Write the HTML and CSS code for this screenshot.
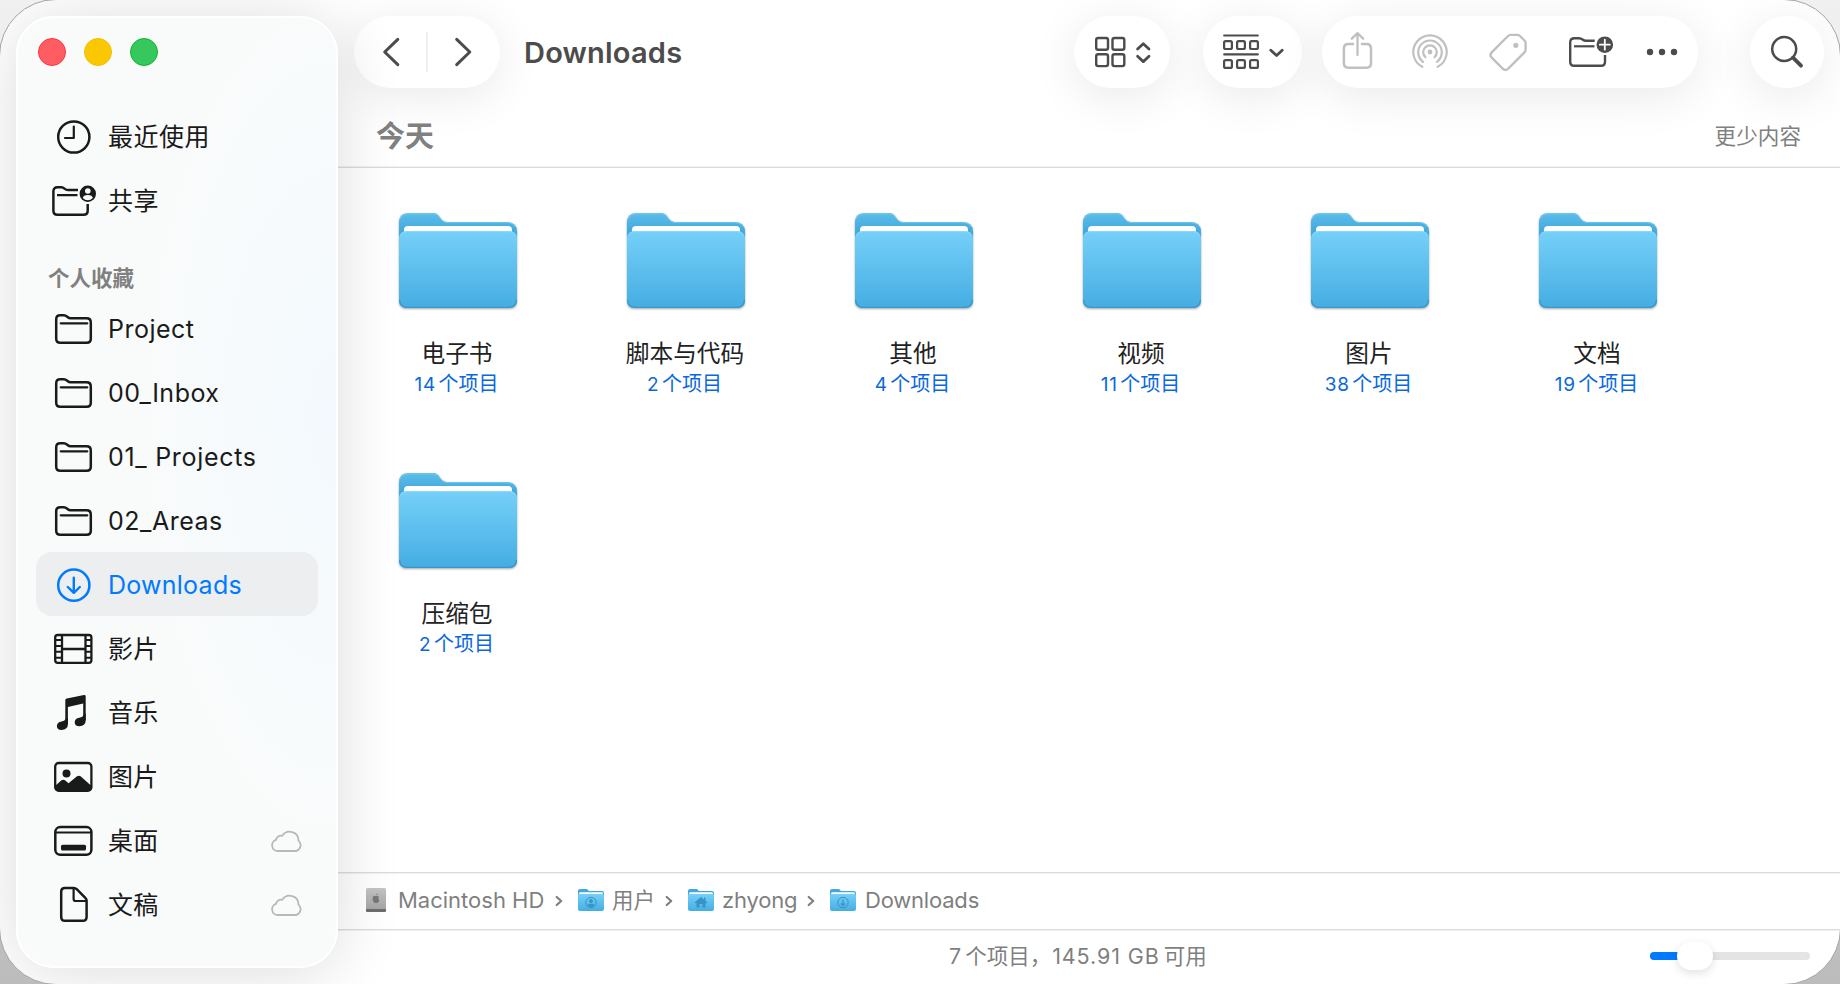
FILE: index.html
```html
<!DOCTYPE html>
<html lang="zh-CN">
<head>
<meta charset="utf-8">
<title>Downloads</title>
<link rel="stylesheet" href="styles.css">
</head>
<body>
<svg class="defs" width="0" height="0" aria-hidden="true">
  <defs>
    <linearGradient id="front" x1="0" y1="0" x2="0" y2="1"><stop offset="0" stop-color="#75d0f9"/><stop offset="1" stop-color="#45ade2"/></linearGradient>
    <linearGradient id="back" x1="0" y1="0" x2="0" y2="1"><stop offset="0" stop-color="#5bbdea"/><stop offset="0.25" stop-color="#41a8dc"/><stop offset="1" stop-color="#3fa4d8"/></linearGradient>
    <linearGradient id="disk" x1="0" y1="0" x2="0" y2="1"><stop offset="0" stop-color="#c4c4c4"/><stop offset="1" stop-color="#a2a2a2"/></linearGradient>
    <symbol id="big-folder" viewBox="0 0 118 96">
      <path d="M0 10Q0 0 9 0H34C42 0 40 9 49 9H108Q118 9 118 19V80H0Z" fill="url(#back)"/>
      <path d="M1 6Q4 .8 9 .8H34C42 .8 40 9.7 49 9.7H108Q114 9.7 116.5 14" fill="none" stroke="#7ccdf2" stroke-width="1" opacity=".7"/>
      <path d="M5 30V17Q5 13 9 13H109Q113 13 113 17V30Z" fill="#fff"/>
      <path d="M0 26Q0 18 8 18H110Q118 18 118 26V87Q118 95 110 95H8Q0 95 0 87Z" fill="url(#front)"/>
      <path d="M.6 87Q1 94.3 8 94.3H110Q117 94.3 117.4 87" fill="none" stroke="#3997cb" stroke-width="1.3"/>
      <path d="M1.5 22.500Q3 18.600 8 18.600H110Q115 18.600 116.500 22.500" fill="none" stroke="#8bdafc" stroke-width="1"/>
    </symbol>
    <symbol id="small-folder" viewBox="0 0 26 22">
      <path d="M0 2Q0 0 2 0H8.500C10 0 10 2 11.500 2H24Q26 2 26 4V18H0Z" fill="#41a8dc"/>
      <path d="M1.200 8V4.200Q1.200 3.300 2.200 3.300H23.800Q24.800 3.300 24.800 4.200V8Z" fill="#fff"/>
      <path d="M0 6.500Q0 5 1.500 5H24.500Q26 5 26 6.500V20Q26 22 24 22H2Q0 22 0 20Z" fill="url(#front)"/>
    </symbol>
    <symbol id="folder" viewBox="0 0 52 40">
      <g fill="none" stroke="currentColor" stroke-width="2.500" stroke-linecap="round" stroke-linejoin="round">
        <path d="M8.200 10.200Q8.200 6.200 12.200 6.200H15.800C19.200 6.200 19.200 9.300 22.800 9.300H38.600Q42.800 9.300 42.800 13.500V29.800Q42.800 33.800 38.800 33.800H12.200Q8.200 33.800 8.200 29.800Z"/>
        <path d="M12.700 14.300H39.300" stroke-width="2.200"/>
      </g>
    </symbol>
    <symbol id="cloud" viewBox="0 0 32 22">
      <path d="M7 21H25A6 6 0 0 0 27.500 10.600A8.800 8.800 0 0 0 11.300 5.800A5 5 0 0 0 5 9.900A5.700 5.700 0 0 0 7 21Z" fill="none" stroke="currentColor" stroke-width="1.800" stroke-linejoin="round"/>
    </symbol>
    <symbol id="sep" viewBox="0 0 8 12"><path d="M1.700 2L6.200 6L1.700 10" fill="none" stroke="currentColor" stroke-width="2.200" stroke-linecap="round" stroke-linejoin="round"/></symbol>
  </defs>
</svg>

<div class="window">
  <aside class="sidebar">
    <div class="lights"><i class="light red"></i><i class="light yellow"></i><i class="light green"></i></div>
    <nav class="nav nav-top">
      <a class="row"><svg class="icon" viewBox="0 0 52 40"><g fill="none" stroke="currentColor" stroke-width="2.500" stroke-linecap="round" stroke-linejoin="round"><circle cx="25.800" cy="20" r="15.600"/><path d="M25.800 9.500V21H17" stroke-width="2.200"/></g></svg><span class="name">最近使用</span></a>
      <a class="row"><svg class="icon" viewBox="0 0 52 40"><g fill="none" stroke="currentColor" stroke-width="2.500"><path d="M30 9.100H20C16.500 9.100 16.500 6.300 13.500 6.300H9.500Q5.400 6.300 5.400 10.300V29.800Q5.400 33.800 9.400 33.800H35.700Q39.700 33.800 39.700 29.800V23"/><path d="M9 14.200H29.500" stroke-width="2.200"/></g><circle cx="39.800" cy="12.700" r="8.200" fill="currentColor"/><circle cx="39.800" cy="10" r="2.800" fill="#f9fafa"/><path d="M34.800 17Q35.200 13.900 39.800 13.900T44.800 17Q42.700 19.200 39.800 19.200T34.800 17Z" fill="#f9fafa"/></svg><span class="name">共享</span></a>
    </nav>
    <h2 class="section">个人收藏</h2>
    <nav class="nav">
      <a class="row"><svg class="icon"><use href="#folder"/></svg><span class="name wide">Project</span></a>
      <a class="row"><svg class="icon"><use href="#folder"/></svg><span class="name wide">00_Inbox</span></a>
      <a class="row"><svg class="icon"><use href="#folder"/></svg><span class="name wider">01_ Projects</span></a>
      <a class="row"><svg class="icon"><use href="#folder"/></svg><span class="name wide">02_Areas</span></a>
      <a class="row selected"><svg class="icon" viewBox="0 0 52 40"><g fill="none" stroke="currentColor" stroke-width="2.500" stroke-linecap="round" stroke-linejoin="round"><circle cx="25.800" cy="20.200" r="15.600"/><path d="M25.800 12.800V27.300M19.800 22L25.800 27.800L31.800 22" stroke-width="2.400"/></g></svg><span class="name">Downloads</span></a>
      <a class="row"><svg class="icon" viewBox="0 0 52 40"><g fill="none" stroke="currentColor" stroke-width="2.300"><rect x="7.200" y="6" width="36.200" height="27.800" rx="2.500"/><path d="M14 6V34M37.500 6V34M14 20H37.500"/><path d="M7 11H14M7 17H14M7 22.700H14M7 28.700H14M37.500 11H43M37.500 17H43M37.500 22.700H43M37.500 28.700H43" stroke-width="2.100"/></g></svg><span class="name">影片</span></a>
      <a class="row"><svg class="icon" viewBox="0 0 52 40"><g fill="currentColor"><path d="M17.300 7.300Q17.300 5.800 18.800 5.500L36 2Q37.700 1.800 37.700 3.200V27.500H35.200V10.600L19.900 13.900V31.500H17.300Z"/><path d="M19.900 24.500V31Q19.900 36.700 13.500 36.900Q8.900 36.700 8.900 32.900Q9 29.300 13.500 28.400Q17.300 27.800 17.300 26Z"/><path d="M37.700 20.500V27Q37.700 33 31.300 33.200Q26.700 33 26.700 29.200Q26.800 25.600 31.300 24.700Q35.200 24 35.200 22Z"/></g></svg><span class="name">音乐</span></a>
      <a class="row"><svg class="icon" viewBox="0 0 52 40"><rect x="7.200" y="6" width="36.200" height="27.800" rx="3.500" fill="none" stroke="currentColor" stroke-width="2.300"/><g fill="currentColor"><circle cx="18.500" cy="16.400" r="4"/><path d="M7 29L13.500 23.300Q15.300 22 17 23.300L20.500 26.300L29 19.300Q30.800 18.100 32.600 19.300L43.500 29V32Q42.500 34 40 34H10Q8 34 7 32Z"/></g></svg><span class="name">图片</span></a>
      <a class="row"><svg class="icon" viewBox="0 0 52 40"><rect x="7.300" y="6.100" width="36.100" height="27.700" rx="5" fill="none" stroke="currentColor" stroke-width="2.500"/><path d="M8 11.500H43" stroke="currentColor" stroke-width="2"/><rect x="13" y="23.700" width="25" height="5.700" rx="1.500" fill="currentColor"/></svg><span class="name">桌面</span><svg class="cloud"><use href="#cloud"/></svg></a>
      <a class="row"><svg class="icon" viewBox="0 0 52 40"><g fill="none" stroke="currentColor" stroke-width="2.500" stroke-linejoin="round"><path d="M17 3H25.800Q27.500 3 28.700 4.200L37.300 12.800Q38.600 14 38.600 15.600V32Q38.600 35.800 34.800 35.800H17Q13.200 35.800 13.200 32V6.800Q13.200 3 17 3Z"/><path d="M25.600 3V14Q25.600 16 27.600 16H38.500" stroke-width="2.200"/></g></svg><span class="name">文稿</span><svg class="cloud"><use href="#cloud"/></svg></a>
    </nav>
  </aside>

  <main class="main">
    <header class="toolbar">
      <div class="pill history">
        <svg width="72" height="40" viewBox="0 0 72 40"><path d="M43.800 7.300L30.700 20L43.800 32.700" fill="none" stroke="currentColor" stroke-width="3" stroke-linecap="round" stroke-linejoin="round"/></svg>
        <i class="divider"></i>
        <svg width="72" height="40" viewBox="0 0 72 40"><path d="M28.700 7.300L41.800 20L28.700 32.700" fill="none" stroke="currentColor" stroke-width="3" stroke-linecap="round" stroke-linejoin="round"/></svg>
      </div>
      <h1 class="title">Downloads</h1>
      <div class="pill view">
        <svg width="96" height="40" viewBox="0 0 96 40"><g fill="none" stroke="currentColor" stroke-width="2.400" stroke-linecap="round" stroke-linejoin="round"><rect x="22.200" y="6" width="11.800" height="11.800" rx="2"/><rect x="38.500" y="6" width="11.800" height="11.800" rx="2"/><rect x="22.200" y="22.300" width="11.800" height="11.800" rx="2"/><rect x="38.500" y="22.300" width="11.800" height="11.800" rx="2"/><path d="M63.600 17L69.300 11.700L75 17M63.600 24.300L69.300 29.600L75 24.300" stroke-width="2.800"/></g></svg>
      </div>
      <div class="pill group">
        <svg width="99" height="40" viewBox="0 0 99 40"><g fill="none" stroke="currentColor" stroke-width="2.200" stroke-linecap="round" stroke-linejoin="round"><path d="M21.200 3.500H54.800M21.200 22.400H54.800"/><rect x="21.100" y="9.200" width="7.800" height="7.800" rx="1.500"/><rect x="34.100" y="9.200" width="7.800" height="7.800" rx="1.500"/><rect x="47.100" y="9.200" width="7.800" height="7.800" rx="1.500"/><rect x="21.100" y="28.100" width="7.800" height="7.800" rx="1.500"/><rect x="34.100" y="28.100" width="7.800" height="7.800" rx="1.500"/><rect x="47.100" y="28.100" width="7.800" height="7.800" rx="1.500"/><path d="M67.800 18.300L73.600 23.500L79.200 18.300" stroke-width="2.800"/></g></svg>
      </div>
      <div class="pill actions">
        <svg class="dim" width="44" height="44" viewBox="0 0 44 44"><g fill="none" stroke="currentColor" stroke-width="2.500" stroke-linecap="round" stroke-linejoin="round"><path d="M17 14H12.500Q7.900 14 7.900 18.700V33.300Q7.900 37.700 12.500 37.700H30.500Q35 37.700 35 33.300V18.700Q35 14 30.500 14H26"/><path d="M21.500 25V3.500M15.800 8.700L21.500 3.200L27.200 8.700" stroke-width="2.300"/></g></svg>
        <svg class="dim" width="44" height="44" viewBox="0 0 44 44"><g fill="none" stroke="currentColor" stroke-width="2.200" stroke-linecap="round"><path d="M14.300 36.800A16.700 16.700 0 1 1 29.700 36.800"/><path d="M15 31.800A11.800 11.800 0 1 1 29 31.800"/><path d="M17.500 27.200A6.800 6.800 0 1 1 26.500 27.200"/></g><circle cx="22" cy="22" r="2.400" fill="currentColor"/></svg>
        <svg class="dim" width="44" height="44" viewBox="0 0 44 44"><path d="M21.500 6.500Q23 4.900 25 4.900H31.300Q32.900 4.900 34 6L38.500 10.500Q39.600 11.600 39.600 13.200V19.200Q39.600 21.300 38.200 22.700L22.200 38.700Q19.400 41.200 16.700 38.600L5.700 27.700Q3.200 25 5.700 22.400Z" fill="none" stroke="currentColor" stroke-width="2.400" stroke-linejoin="round"/><circle cx="29.800" cy="15.300" r="2.600" fill="currentColor"/></svg>
        <svg width="52" height="44" viewBox="0 0 52 44"><g fill="none" stroke="currentColor" stroke-width="2.400"><path d="M31.700 10.800H23C19.500 10.800 19.500 8.200 16 8.200H11.500Q7.200 8.200 7.200 12.200V31.800Q7.200 35.800 11.200 35.800H38Q42 35.800 42 31.800V25"/><path d="M11 16.300H31.500" stroke-width="2.200"/></g><circle cx="41.800" cy="14.700" r="8.300" fill="currentColor"/><path d="M36.800 14.700H46.800M41.800 9.700V19.700" stroke="#fff" stroke-width="1.800" stroke-linecap="round"/></svg>
        <svg width="44" height="44" viewBox="0 0 44 44"><g fill="currentColor"><circle cx="10" cy="22" r="3.200"/><circle cx="22" cy="22" r="3.200"/><circle cx="34" cy="22" r="3.200"/></g></svg>
      </div>
      <div class="pill search">
        <svg width="74" height="40" viewBox="0 0 74 40"><circle cx="34.200" cy="17" r="12" fill="none" stroke="currentColor" stroke-width="2.500"/><path d="M43 25.700L51 33.700" stroke="currentColor" stroke-width="3.800" stroke-linecap="round"/></svg>
      </div>
    </header>

    <div class="group-head"><h2 class="today">今天</h2><span class="less">更少内容</span></div>

    <section class="grid">
      <div class="item"><svg class="folder-art"><use href="#big-folder"/></svg><span class="label">电子书</span><span class="count"><b>14</b>个项目</span></div>
      <div class="item"><svg class="folder-art"><use href="#big-folder"/></svg><span class="label">脚本与代码</span><span class="count"><b>2</b>个项目</span></div>
      <div class="item"><svg class="folder-art"><use href="#big-folder"/></svg><span class="label">其他</span><span class="count"><b>4</b>个项目</span></div>
      <div class="item"><svg class="folder-art"><use href="#big-folder"/></svg><span class="label">视频</span><span class="count"><b>11</b>个项目</span></div>
      <div class="item"><svg class="folder-art"><use href="#big-folder"/></svg><span class="label">图片</span><span class="count"><b>38</b>个项目</span></div>
      <div class="item"><svg class="folder-art"><use href="#big-folder"/></svg><span class="label">文档</span><span class="count"><b>19</b>个项目</span></div>
      <div class="item"><svg class="folder-art"><use href="#big-folder"/></svg><span class="label">压缩包</span><span class="count"><b>2</b>个项目</span></div>
    </section>

    <footer class="pathbar">
      <svg class="disk" viewBox="0 0 20 24"><rect width="20" height="24" rx="1.500" fill="url(#disk)"/><path d="M0 21H20V22.500Q20 24 18.500 24H1.500Q0 24 0 22.500Z" fill="#6d6d6d"/><path d="M10 8.200Q8 7.200 6.900 9Q6 11.500 7.600 14Q8.700 15.500 10 14.800Q11.500 15.500 12.500 14Q13.200 13 13.400 12.200Q11.500 11 13 8.800Q11.700 7.400 10 8.200ZM10 7.500Q9.900 6 11.500 5.300Q11.600 7 10 7.500Z" fill="#777"/></svg>
      <span class="crumb c-disk">Macintosh HD</span>
      <svg class="sep"><use href="#sep"/></svg>
      <svg class="mini" viewBox="0 0 26 22"><use href="#small-folder"/><g fill="none" stroke="#3793c4" stroke-width="1"><circle cx="13" cy="13.500" r="5.200"/></g><circle cx="13" cy="12" r="1.900" fill="#3793c4"/><path d="M9.300 16Q13 13.500 16.700 16Q13 20 9.300 16Z" fill="#3793c4"/></svg>
      <span class="crumb c-users">用户</span>
      <svg class="sep"><use href="#sep"/></svg>
      <svg class="mini" viewBox="0 0 26 22"><use href="#small-folder"/><path d="M6.500 13.500L13 8L19.500 13.500L18.500 14.200L17.500 13.500V18.500H14.500V15H11.500V18.500H8.500V13.500L7.500 14.200Z" fill="#3793c4"/><path d="M16 8.500H17.500V11.500H16Z" fill="#3793c4"/></svg>
      <span class="crumb c-home">zhyong</span>
      <svg class="sep"><use href="#sep"/></svg>
      <svg class="mini" viewBox="0 0 26 22"><use href="#small-folder"/><g fill="none" stroke="#3793c4" stroke-width="1"><circle cx="13" cy="13.500" r="5.200"/><path d="M13 10.500V16.200M11 14.500L13 16.500L15 14.500" stroke-width="1.200"/></g></svg>
      <span class="crumb c-down">Downloads</span>
    </footer>
    <footer class="status">
      <span class="summary">7<i class="thin"></i>个项目，<span class="size">145.91 GB</span><i class="thin"></i>可用</span>
      <div class="slider"><i class="fill"></i><i class="knob"></i></div>
    </footer>
  </main>
</div>
</body>
</html>
```
FILE: styles.css
```css
* { box-sizing: border-box; }

body {
  display: flex;
  margin: 0;
  width: 1840px;
  height: 984px;
  overflow: hidden;
  background: linear-gradient(180deg, #f0f0f0 0%, #dcdcdc 50%, #bcbcbc 100%);
  font-family: Inter, "Noto Sans CJK SC", sans-serif;
  color: #1a1a1a;
}

svg { display: block; flex: none; }
h1, h2 { margin: 0; }
.defs { position: absolute; }

/* The frame sits one pixel past the viewport, so its outline shows on the corners only */
.window {
  display: flex;
  flex: none;
  width: 1842px;
  height: 986px;
  margin: -1px;
  padding: 16px 0 0 16px;
  border: 1px solid #a4a4a4;
  border-radius: 57px;
  background: #fff;
  overflow: hidden;
}

/* Sidebar */
.sidebar {
  position: relative;
  z-index: 1;
  flex: none;
  width: 322px;
  height: 952px;
  padding: 20px 18px 0;
  border-radius: 38px;
  border: 2px solid #fff;
  background: radial-gradient(ellipse 190px 420px at 100% 42%, #f3f9fe 0%, #f9fbfb 100%);
  box-shadow: 0 4px 64px rgba(0, 0, 0, 0.14);
}

.lights { display: flex; gap: 18px; padding-left: 2px; }
.light { width: 28px; height: 28px; border-radius: 50%; }
.red { background: #ff5d61; border: 1px solid #fb3440; }
.yellow { background: #f9c800; border: 1px solid #f4bd00; }
.green { background: #36c85c; border: 1px solid #10b62e; }

.nav-top { margin-top: 38px; }

.row {
  display: flex;
  align-items: center;
  height: 64px;
  padding: 2px 15px 0 12px;
  border-radius: 16px;
  font-size: 25px;
  line-height: 36px;
}

.row .icon { width: 52px; height: 40px; margin-right: 8px; }
.name { white-space: pre; letter-spacing: 0.250px; }
.nav-top .name { letter-spacing: 0.500px; }
.name.wide { letter-spacing: 0.500px; }
.name.wider { letter-spacing: 0.700px; }
.selected { background: #eceeef; color: #007aff; }
.cloud { width: 32px; height: 22px; margin-left: auto; color: #b8b8b8; }

.section {
  height: 64px;
  padding: 32px 0 0 12px;
  font-size: 21.500px;
  line-height: 28px;
  font-weight: 600;
  color: #808080;
}

/* Main column */
.main { flex: 1; min-width: 0; display: flex; flex-direction: column; }

.toolbar {
  display: flex;
  align-items: center;
  flex: none;
  height: 72px;
  padding: 0 16px;
  color: #4c4c4c;
}

.pill {
  display: flex;
  align-items: center;
  height: 72px;
  border-radius: 36px;
  background: #fff;
  box-shadow: 0 8px 48px rgba(0, 0, 0, 0.09);
}

.history { width: 146px; }
.divider { width: 2px; height: 40px; background: #f0f0f0; }
.title { margin-left: 24px; padding-top: 1px; font-size: 29px; line-height: 40px; font-weight: 600; letter-spacing: 0.200px; }
.view { margin-left: auto; }
.group { margin-left: 33px; }
.actions { width: 376px; margin-left: 20px; padding-left: 13.500px; }
.actions svg:nth-child(2) { margin-left: 28.500px; }
.actions svg:nth-child(3) { margin-left: 34px; }
.actions svg:nth-child(4) { margin-left: 32.500px; }
.actions svg:nth-child(5) { margin-left: 25.500px; }
.search { margin-left: 52px; }
.dim { color: #c0c0c0; }

.group-head {
  display: flex;
  justify-content: space-between;
  align-items: center;
  flex: none;
  height: 80px;
  padding: 17px 39px 0 38px;
  border-bottom: 1px solid #dcdcdc;
  box-shadow: inset 0 -1px #f0f0f0;
  color: #808080;
}

.today { padding-top: 2px; font-size: 29px; line-height: 40px; font-weight: 700; }
.less { font-size: 21.600px; line-height: 30px; }

.grid {
  flex: 1;
  display: grid;
  grid-template-columns: repeat(6, 228px);
  grid-auto-rows: 260px;
  align-content: start;
  padding: 45px 0 0 5px;
}

.item { display: flex; flex-direction: column; align-items: center; }

.folder-art {
  width: 118px;
  height: 96px;
  margin-left: 2px;
  filter: drop-shadow(0 1px 1px rgba(0, 0, 0, 0.35));
}

.label { margin-top: 28px; font-size: 23.700px; line-height: 34px; color: #222; }
.count { margin-left: -1px; font-size: 20px; line-height: 26px; color: #0a68de; }
.count b { margin-right: 2.500px; font-size: 19px; font-weight: 400; letter-spacing: 0.800px; }

/* Bottom bars */
.pathbar {
  display: flex;
  align-items: center;
  flex: none;
  height: 57px;
  padding: 0 0 2px 28px;
  border-top: 1px solid #dcdcdc;
  box-shadow: inset 0 1px #f0f0f0;
  font-size: 22px;
  line-height: 30px;
  color: #7f7f7f;
}

.disk { width: 20px; height: 24px; }
.crumb { white-space: nowrap; }
.c-disk { width: 147px; margin-left: 12px; }
.c-users { width: 43px; margin-left: 8px; font-size: 21.500px; }
.c-home { width: 75px; margin-left: 8px; letter-spacing: -0.200px; }
.c-down { margin-left: 9px; letter-spacing: -0.200px; }
.sep { width: 8px; height: 12px; margin: 2px 15px 0 10px; }
.mini { width: 26px; height: 22px; }

.status {
  display: flex;
  align-items: center;
  justify-content: flex-end;
  flex: none;
  height: 55px;
  padding: 0 30px 2px 0;
  border-top: 1px solid #dcdcdc;
  box-shadow: inset 0 1px #f0f0f0;
  font-size: 21.500px;
  line-height: 30px;
  color: #7f7f7f;
}

.summary { width: 261px; margin-right: 440px; white-space: nowrap; }
.size { margin-left: 1px; letter-spacing: 0.900px; }
.thin { display: inline-block; width: 4px; }

.slider {
  position: relative;
  width: 160px;
  height: 8px;
  border-radius: 4px;
  background: #e4e4e4;
}

.fill { display: block; width: 40px; height: 8px; border-radius: 4px; background: #007aff; }

.knob {
  position: absolute;
  left: 27px;
  top: -10px;
  width: 36px;
  height: 28px;
  border-radius: 14px;
  background: #fff;
  box-shadow: 0 3px 10px rgba(0, 0, 0, 0.12);
}
```
